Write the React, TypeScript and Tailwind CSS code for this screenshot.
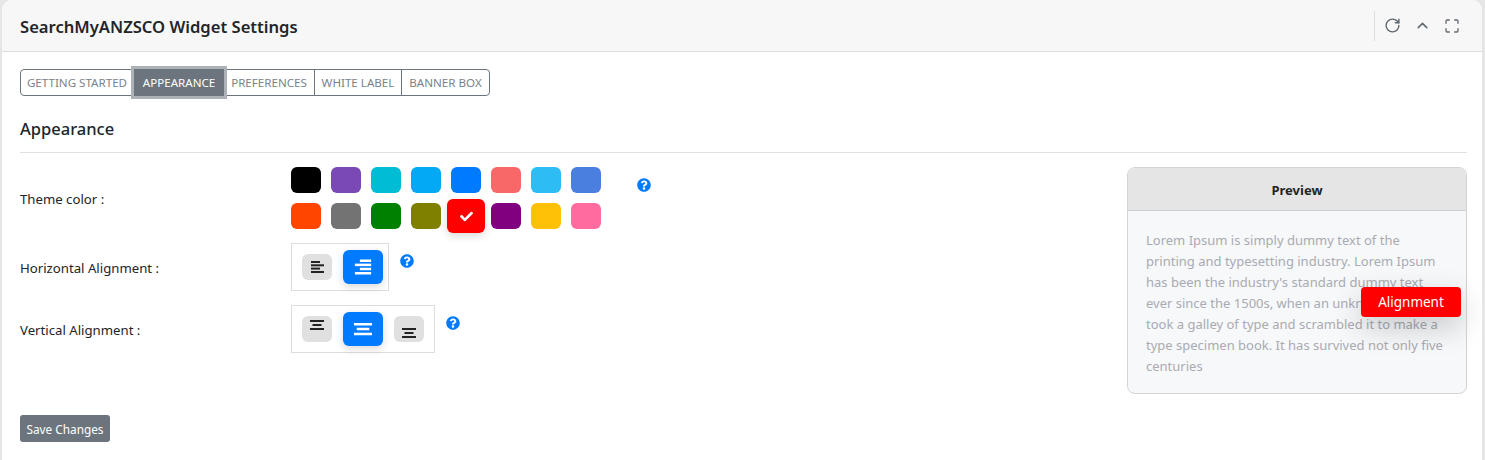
import { FC } from "react";
import { ChevronUp, Maximize, RotateCw } from "lucide-react";
import { FaCheck, FaQuestionCircle } from "react-icons/fa";

const swatches = [
  "bg-[#000000]",
  "bg-[#7a49b6]",
  "bg-[#00bcd4]",
  "bg-[#03a9f4]",
  "bg-[#007bff]",
  "bg-[#f96868]",
  "bg-[#2ebcf4]",
  "bg-[#4a7fe0]",
  "bg-[#ff4500]",
  "bg-[#737373]",
  "bg-[#008000]",
  "bg-[#808000]",
  "bg-[#ff0000]",
  "bg-[#800080]",
  "bg-[#ffc107]",
  "bg-[#ff6b9f]",
];

const tabs = [
  { label: "GETTING STARTED", width: "w-[113px]" },
  { label: "APPEARANCE", width: "w-[90px]" },
  { label: "PREFERENCES", width: "w-[91px]" },
  { label: "WHITE LABEL", width: "w-[87px]" },
  { label: "BANNER BOX", width: "w-[87px]" },
];

// each bar is [x, y, width] in a 16x16 box
const AlignIcon: FC<{ bars: number[][]; className: string; size?: number }> = ({ bars, className, size = 16 }) => (
  <svg width={size} height={size} viewBox="0 0 16 16" className={`${className} overflow-visible`} fill="currentColor">
    {bars.map(([x, y, w]) => (
      <rect key={y} x={x} y={y} width={w} height={2} />
    ))}
  </svg>
);

const AlignButton: FC<{ active?: boolean; bars: number[][] }> = ({ active, bars }) =>
  active ? (
    <div className="flex h-[34px] w-10 items-center justify-center rounded-md bg-[#007bff] shadow-[0_3px_8px_rgba(0,0,0,0.15)]">
      <AlignIcon bars={bars} className="text-white" size={20} />
    </div>
  ) : (
    <div className="flex h-[26px] w-[30px] items-center justify-center rounded-md bg-[#e0e0e0]">
      <AlignIcon bars={bars} className="text-[#222222]" size={16} />
    </div>
  );

const Help: FC = () => <FaQuestionCircle className="text-[14px] text-[#007bff]" />;

export default function App() {
  return (
    <div className="h-[460px] w-[1485px] bg-[#e6e6e6] pl-[2px] pr-[3px] font-['Noto_Sans',sans-serif] text-[#212529]">
      <div className="h-[460px] overflow-hidden rounded-t-[10px] bg-white">
        <div className="flex h-[52px] items-center justify-between border-b border-[#dddddd] bg-[#f7f7f7] pl-[18px] pr-[22px]">
          <h1 className="pt-[3px] text-[16.6px] font-semibold">SearchMyANZSCO Widget Settings</h1>
          <div className="flex h-[30px] items-center gap-[13px] border-l border-[#dddddd] pl-[9px] text-[#5f6870]">
            <RotateCw size={17} strokeWidth={2} />
            <ChevronUp size={17} strokeWidth={2.2} />
            <Maximize size={16} strokeWidth={2} />
          </div>
        </div>

        <div className="px-[18px] pt-[17px]">
          <div className="flex h-[27px] w-[470px] rounded border border-[#6c757d]">
            {tabs.map((tab) =>
              tab.label === "APPEARANCE" ? (
                <div
                  key={tab.label}
                  className={`${tab.width} z-10 -my-px flex shrink-0 items-center justify-center bg-[#6c757d] pt-px text-[11.6px] text-white shadow-[0_0_0_3px_#adb2b8]`}
                >
                  {tab.label}
                </div>
              ) : (
                <div
                  key={tab.label}
                  className={`${tab.width} flex shrink-0 items-center justify-center border-r border-[#6c757d] pt-px text-[11.6px] text-[#7a828a] last:border-r-0`}
                >
                  {tab.label}
                </div>
              ),
            )}
          </div>

          <h2 className="mt-[21px] flex h-[24px] items-center text-[16.5px] font-medium">Appearance</h2>
          <div className="mt-[11px] h-px w-[1447px] bg-[#dee2e6]" />

          <div className="mt-[14px] flex h-[228px] w-[1447px] justify-between">
            <div className="flex flex-col gap-[14px]">
              <div className="flex items-center">
                <div className="w-[271px] pt-[4px] text-[13.2px]">Theme color :</div>
                <div className="grid grid-cols-[repeat(8,30px)] gap-x-[10px] gap-y-[10px]">
                  {swatches.map((color, i) =>
                    i === 12 ? (
                      <div key={color} className="flex h-[26px] w-[30px] items-center justify-center">
                        <div className={`${color} flex h-[34px] w-[38px] shrink-0 items-center justify-center rounded-md text-white shadow-[0_3px_8px_rgba(0,0,0,0.15)]`}>
                          <FaCheck className="text-[13px]" />
                        </div>
                      </div>
                    ) : (
                      <div key={color} className={`${color} h-[26px] w-[30px] rounded-md`} />
                    ),
                  )}
                </div>
                <div className="mb-[26px] ml-[36px]">
                  <Help />
                </div>
              </div>

              <div className="flex items-center">
                <div className="w-[271px] pt-[4px] text-[13.2px]">Horizontal Alignment :</div>
                <div className="flex h-12 items-center gap-[11px] border border-[#dddddd] pl-[10px] pr-[5px]">
                  <AlignButton bars={[[2, 2, 9], [2, 5.3, 13], [2, 8.6, 9], [2, 12, 13]]} />
                  <AlignButton active bars={[[5.5, 2, 9], [1.5, 5.3, 13], [5.5, 8.6, 9], [1.5, 12, 13]]} />
                </div>
                <div className="mb-[13px] ml-[11px]">
                  <Help />
                </div>
              </div>

              <div className="flex items-center">
                <div className="w-[271px] pt-[4px] text-[13.2px]">Vertical Alignment :</div>
                <div className="flex h-12 items-center gap-[11px] border border-[#dddddd] px-[10px]">
                  <AlignButton bars={[[1, -1, 14], [3.5, 3, 9], [1, 7, 14]]} />
                  <AlignButton active bars={[[0.8, 3.2, 14.4], [3, 7, 10], [0.8, 11, 14.4]]} />
                  <AlignButton bars={[[1, 7, 14], [3.5, 11, 9], [1, 15, 14]]} />
                </div>
                <div className="mb-[13px] ml-[11px]">
                  <Help />
                </div>
              </div>
            </div>

            <div className="relative h-[227px] w-[340px] rounded-lg border border-[#d4d4d4] bg-[#f7f8fa]">
              <div className="flex h-[43px] items-center justify-center rounded-t-lg border-b border-[#cfcfcf] bg-[#e5e5e5] pt-[4px] text-[13px] font-bold">
                Preview
              </div>
              <p className="px-[18px] pt-[19px] text-[13px] leading-[21px] text-[#a8abb2]">
                Lorem Ipsum is simply dummy text of the printing and typesetting industry. Lorem Ipsum has been the
                industry's standard dummy text ever since the 1500s, when an unknown printer took a galley of type and
                scrambled it to make a type specimen book. It has survived not only five centuries
              </p>
              <div className="absolute left-[233px] top-[119px] flex h-[30px] w-[100px] items-center justify-center rounded bg-[#ff0000] text-[13.5px] text-white shadow-[0_10px_30px_rgba(0,0,0,0.2)]">
                Alignment
              </div>
            </div>
          </div>

          <button className="mt-[20px] block h-[27px] w-[90px] rounded-[3px] bg-[#6c757d] pt-[2px] text-[11.8px] text-white">
            Save Changes
          </button>
        </div>
      </div>
    </div>
  );
}
